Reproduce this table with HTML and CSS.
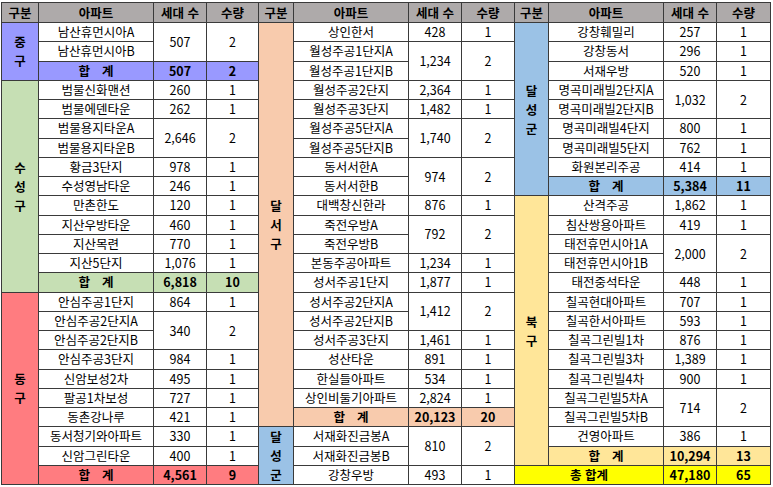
FILE: index.html
```html
<!DOCTYPE html>
<html lang="ko">
<head>
<meta charset="utf-8">
<title>아파트 현황</title>
<link rel="stylesheet" href="styles.css">
</head>
<body>
<table class="sheet">
<colgroup>
<col class="c-gu"><col class="c-apt"><col class="c-num"><col class="c-qty">
<col class="c-gu2"><col class="c-apt"><col class="c-num"><col class="c-qty2">
<col class="c-gu3"><col class="c-apt"><col class="c-num"><col class="c-qty3">
</colgroup>
<tr class="head">
<th>구분</th><th>아파트</th><th>세대 수</th><th>수량</th>
<th>구분</th><th>아파트</th><th>세대 수</th><th>수량</th>
<th>구분</th><th>아파트</th><th>세대 수</th><th>수량</th>
</tr>
<tr>
<td class="gu purple" rowspan="3"><span class="ch">중</span><span class="ch">구</span></td><td>남산휴먼시아A</td><td rowspan="2">507</td><td rowspan="2">2</td>
<td class="gu peach" rowspan="21"><span class="ch">달</span><span class="ch">서</span><span class="ch">구</span></td><td>상인한서</td><td>428</td><td>1</td>
<td class="gu blue" rowspan="9"><span class="ch">달</span><span class="ch">성</span><span class="ch">군</span></td><td>강창훼밀리</td><td>257</td><td>1</td>
</tr>
<tr>
<td>남산휴먼시아B</td>
<td>월성주공1단지A</td><td rowspan="2">1,234</td><td rowspan="2">2</td>
<td>강창동서</td><td>296</td><td>1</td>
</tr>
<tr>
<td class="sum purple"><span class="hap">합</span>계</td><td class="sum purple">507</td><td class="sum purple">2</td>
<td>월성주공1단지B</td>
<td>서재우방</td><td>520</td><td>1</td>
</tr>
<tr>
<td class="gu green" rowspan="11"><span class="ch">수</span><span class="ch">성</span><span class="ch">구</span></td><td>범물신화맨션</td><td>260</td><td>1</td>
<td>월성주공2단지</td><td>2,364</td><td>1</td>
<td>명곡미래빌2단지A</td><td rowspan="2">1,032</td><td rowspan="2">2</td>
</tr>
<tr>
<td>범물에덴타운</td><td>262</td><td>1</td>
<td>월성주공3단지</td><td>1,482</td><td>1</td>
<td>명곡미래빌2단지B</td>
</tr>
<tr>
<td>범물용지타운A</td><td rowspan="2">2,646</td><td rowspan="2">2</td>
<td>월성주공5단지A</td><td rowspan="2">1,740</td><td rowspan="2">2</td>
<td>명곡미래빌4단지</td><td>800</td><td>1</td>
</tr>
<tr>
<td>범물용지타운B</td>
<td>월성주공5단지B</td>
<td>명곡미래빌5단지</td><td>762</td><td>1</td>
</tr>
<tr>
<td>황금3단지</td><td>978</td><td>1</td>
<td>동서서한A</td><td rowspan="2">974</td><td rowspan="2">2</td>
<td>화원본리주공</td><td>414</td><td>1</td>
</tr>
<tr>
<td>수성영남타운</td><td>246</td><td>1</td>
<td>동서서한B</td>
<td class="sum blue"><span class="hap">합</span>계</td><td class="sum blue">5,384</td><td class="sum blue">11</td>
</tr>
<tr>
<td>만촌한도</td><td>120</td><td>1</td>
<td>대백창신한라</td><td>876</td><td>1</td>
<td class="gu yellow" rowspan="14"><span class="ch">북</span><span class="ch">구</span></td><td>산격주공</td><td>1,862</td><td>1</td>
</tr>
<tr>
<td>지산우방타운</td><td>460</td><td>1</td>
<td>죽전우방A</td><td rowspan="2">792</td><td rowspan="2">2</td>
<td>침산쌍용아파트</td><td>419</td><td>1</td>
</tr>
<tr>
<td>지산목련</td><td>770</td><td>1</td>
<td>죽전우방B</td>
<td>태전휴먼시아1A</td><td rowspan="2">2,000</td><td rowspan="2">2</td>
</tr>
<tr>
<td>지산5단지</td><td>1,076</td><td>1</td>
<td>본동주공아파트</td><td>1,234</td><td>1</td>
<td>태전휴먼시아1B</td>
</tr>
<tr>
<td class="sum green"><span class="hap">합</span>계</td><td class="sum green">6,818</td><td class="sum green">10</td>
<td>성서주공1단지</td><td>1,877</td><td>1</td>
<td>태전중석타운</td><td>448</td><td>1</td>
</tr>
<tr>
<td class="gu red" rowspan="10"><span class="ch">동</span><span class="ch">구</span></td><td>안심주공1단지</td><td>864</td><td>1</td>
<td>성서주공2단지A</td><td rowspan="2">1,412</td><td rowspan="2">2</td>
<td>칠곡현대아파트</td><td>707</td><td>1</td>
</tr>
<tr>
<td>안심주공2단지A</td><td rowspan="2">340</td><td rowspan="2">2</td>
<td>성서주공2단지B</td>
<td>칠곡한서아파트</td><td>593</td><td>1</td>
</tr>
<tr>
<td>안심주공2단지B</td>
<td>성서주공3단지</td><td>1,461</td><td>1</td>
<td>칠곡그린빌1차</td><td>876</td><td>1</td>
</tr>
<tr>
<td>안심주공3단지</td><td>984</td><td>1</td>
<td>성산타운</td><td>891</td><td>1</td>
<td>칠곡그린빌3차</td><td>1,389</td><td>1</td>
</tr>
<tr>
<td>신암보성2차</td><td>495</td><td>1</td>
<td>한실들아파트</td><td>534</td><td>1</td>
<td>칠곡그린빌4차</td><td>900</td><td>1</td>
</tr>
<tr>
<td>팔공1차보성</td><td>727</td><td>1</td>
<td>상인비둘기아파트</td><td>2,824</td><td>1</td>
<td>칠곡그린빌5차A</td><td rowspan="2">714</td><td rowspan="2">2</td>
</tr>
<tr>
<td>동촌강나루</td><td>421</td><td>1</td>
<td class="sum peach"><span class="hap">합</span>계</td><td class="sum peach">20,123</td><td class="sum peach">20</td>
<td>칠곡그린빌5차B</td>
</tr>
<tr>
<td>동서청기와아파트</td><td>330</td><td>1</td>
<td class="gu blue" rowspan="3"><span class="ch">달</span><span class="ch">성</span><span class="ch">군</span></td><td>서재화진금봉A</td><td rowspan="2">810</td><td rowspan="2">2</td>
<td>건영아파트</td><td>386</td><td>1</td>
</tr>
<tr>
<td>신암그린타운</td><td>400</td><td>1</td>
<td>서재화진금봉B</td>
<td class="sum yellow"><span class="hap">합</span>계</td><td class="sum yellow">10,294</td><td class="sum yellow">13</td>
</tr>
<tr>
<td class="sum red"><span class="hap">합</span>계</td><td class="sum red">4,561</td><td class="sum red">9</td>
<td>강창우방</td><td>493</td><td>1</td>
<td class="sum total" colspan="2">총 합계</td><td class="sum total">47,180</td><td class="sum total">65</td>
</tr>
</table>
</body>
</html>
```

FILE: styles.css
```css
html, body {
  margin: 0;
  padding: 0;
  background: #ffffff;
}

body {
  padding: 2px 0 0 1px;
  font-family: "Noto Sans CJK KR", "Noto Sans", sans-serif;
  font-size: 12.5px;
  color: #000000;
}

.sheet {
  border-collapse: collapse;
  table-layout: fixed;
  width: 769px;
}

.c-gu { width: 37px; }
.c-gu2 { width: 35px; }
.c-gu3 { width: 34px; }
.c-apt { width: 115px; }
.c-num { width: 53px; }
.c-qty { width: 52px; }
.c-qty2 { width: 53px; }
.c-qty3 { width: 54px; }

.sheet tr {
  height: 19.25px;
}

.sheet tr.head {
  height: 20px;
}

.sheet th,
.sheet td {
  border: 1px solid #3a3a3a;
  padding: 0;
  text-align: center;
  vertical-align: middle;
  line-height: 16px;
  white-space: nowrap;
  overflow: hidden;
}

.sheet th {
  background: #aeaaaa;
  font-weight: 700;
  font-size: 12.5px;
}

.gu {
  font-weight: 700;
  font-size: 12.5px;
}

.ch {
  display: block;
  line-height: 19px;
}

.sum {
  font-weight: 700;
}

.hap {
  margin-right: 12px;
}

.purple { background: #9999ff; }
.green { background: #c6dfb4; }
.red { background: #ff7c80; }
.peach { background: #f8cbad; }
.blue { background: #9bc2e6; }
.yellow { background: #ffe699; }
.total { background: #ffff00; }
```
